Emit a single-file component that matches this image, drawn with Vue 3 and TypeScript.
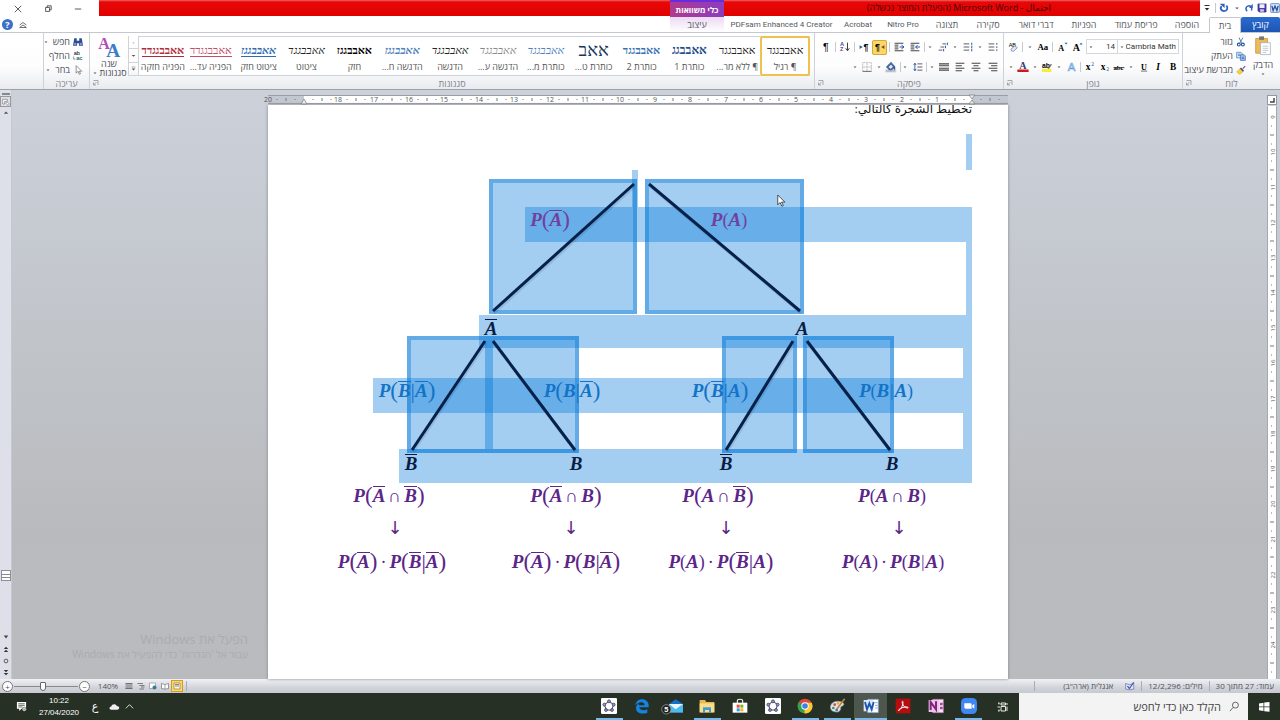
<script setup lang="ts">
import { ref } from 'vue'

const icons: Record<string, string> = {
  dd: '<path d="M5 7h6L8 10z" fill="#555"/>',
  word: '<rect x="1" y="1" width="14" height="14" rx="1" fill="#dbe7f6" stroke="#2b5fae"/><path d="M3 4.500l2 7.500 3-7 3 7 2-7.500" fill="none" stroke="#1d4f9f" stroke-width="2"/>',
  save: '<path d="M1.500 1.500h13v13h-11l-2-2z" fill="#4a3fb0" stroke="#2e2878"/><path d="M4 2h8v6H4z" fill="#eef"/><path d="M5 10h6v4H5z" fill="#ccd"/>',
  redo: '<path d="M12 12c2-5-2-9-6-7-3 1-4 5-1 8" fill="none" stroke="#2d62b8" stroke-width="2.500"/><path d="M14 1v7H8z" fill="#2d62b8"/>',
  undo: '<path d="M4 5c-3 4 0 8 4 8 5 0 7-5 4-9" fill="none" stroke="#2d62b8" stroke-width="3"/><path d="M1 1h8v7z" fill="#2d62b8"/>',
  more: '<path d="M4 4h8" stroke="#222" stroke-width="1.500"/><path d="M4.500 8h7L8 12z" fill="#222"/>',
  cut: '<path d="M5 1l4 9M11 1L6 10" stroke="#5b7fb5" stroke-width="1.600" fill="none"/><circle cx="4.500" cy="12" r="2.300" fill="none" stroke="#2452a0" stroke-width="1.800"/><circle cx="11" cy="12" r="2.300" fill="none" stroke="#2452a0" stroke-width="1.800"/>',
  copy: '<path d="M1 2h7l2 2v7H1z" fill="#dce9fa" stroke="#3567b2"/><path d="M7 6h6l2 2v7H7z" fill="#9fc3f0" stroke="#2c5da8"/><path d="M3 5h4M3 7h4M9 10h4M9 12h4" stroke="#2c5da8"/>',
  brush: '<path d="M10 5l4-4 1.500 1.500-4 4z" fill="#7355b0"/><path d="M8 4l5 5-2 2-5-5z" fill="#4c4c86"/><path d="M6 6l5 5-5 4-5-4z" fill="#f3d33c" stroke="#b89520" stroke-width=".7"/>',
  paste: '<path d="M2 5h17v21H2z" fill="#eeb95b" stroke="#c58d2d"/><path d="M7 2h7v5H7z" fill="#777"/><path d="M9 11h14v17H9z" fill="#fff" stroke="#9aa7b8"/><path d="M12 16h8M12 19h8M12 22h8M12 25h5" stroke="#a9b4c4"/>',
  grow: '<text x="1" y="14" font-family="Liberation Serif" font-weight="bold" font-size="16">A</text><path d="M12 4l2.500-3L17 4z" fill="#2858a8"/>',
  shrink: '<text x="2" y="14" font-family="Liberation Serif" font-weight="bold" font-size="13">A</text><path d="M12 1h5l-2.500 3z" fill="#2858a8"/>',
  aa: '<text x="-1" y="13" font-family="Liberation Serif" font-weight="bold" font-size="14">Aa</text>',
  clear: '<text x="1" y="8" font-family="Liberation Sans" font-size="9">AB</text><path d="M5 11l6-5 4 3-6 6-4-1z" fill="#dfe4f2" stroke="#6070a0"/>',
  bold: '<text x="3" y="13" font-family="Liberation Serif" font-weight="bold" font-size="15">B</text>',
  italic: '<text x="5" y="13" font-family="Liberation Serif" font-style="italic" font-weight="bold" font-size="15">I</text>',
  under: '<text x="3" y="12" font-family="Liberation Serif" font-weight="bold" font-size="13">U</text><path d="M3 14.500h10" stroke="#222"/>',
  strike: '<text x="-1" y="12" font-family="Liberation Serif" font-weight="bold" font-size="11">abc</text><path d="M-1 9h18" stroke="#222"/>',
  sub: '<text x="1" y="12" font-family="Liberation Serif" font-weight="bold" font-size="15">x</text><text x="10" y="15" font-size="8" fill="#2858a8">2</text>',
  sup: '<text x="1" y="13" font-family="Liberation Serif" font-weight="bold" font-size="15">x</text><text x="10" y="7" font-size="8" fill="#2858a8">2</text>',
  outline: '<text x="1" y="14" font-family="Liberation Sans" font-size="18" fill="#e8f2fd" stroke="#5d9bd8">A</text>',
  hilite: '<path d="M0 11h15v5H0z" fill="#f8ee2c"/><text x="0" y="9" font-size="11" font-weight="bold" font-family="Liberation Sans">ab</text><path d="M9 10l5-7 2 1-5 7z" fill="#667"/>',
  color: '<text x="2" y="11" font-family="Liberation Serif" font-weight="bold" font-size="16" fill="#27407c">A</text><path d="M-1 12h18v4H-1z" fill="#d11818"/>',
  bullets: '<path d="M1 3h9M1 8h9M1 13h9" stroke="#555" stroke-width="1.500"/><path d="M13 2h2v2h-2zM13 7h2v2h-2zM13 12h2v2h-2z" fill="#2452a0"/>',
  numbers: '<path d="M1 3h9M1 8h9M1 13h9" stroke="#555" stroke-width="1.500"/><path d="M14 1v4M14 6v4M14 11v4" stroke="#2452a0" stroke-width="1.500"/>',
  levels: '<path d="M7 3h6M4 8h6M1 13h6" stroke="#555" stroke-width="1.500"/><path d="M15 1v4M12 6v4M9 11v4" stroke="#2452a0" stroke-width="1.500"/>',
  outdent: '<path d="M1 2h14M1 14h14M1 5h6M1 8h6M1 11h6" stroke="#444" stroke-width="1.600"/><path d="M16 8h-7M12 5L9 8l3 3" stroke="#2858a8" stroke-width="1.600" fill="none"/>',
  indent: '<path d="M1 2h14M1 14h14M1 5h6M1 8h6M1 11h6" stroke="#444" stroke-width="1.600"/><path d="M9 8h7M12 5l4 3-4 3" stroke="#2858a8" stroke-width="1.600" fill="none"/>',
  rtl: '<text x="0" y="13" font-size="14" font-weight="bold" font-family="Liberation Sans">¶</text><path d="M15 5v6l-5-3z" fill="#8a3a20"/>',
  ltr: '<text x="7" y="13" font-size="14" font-weight="bold" font-family="Liberation Sans">¶</text><path d="M1 5v6l5-3z" fill="#2858a8"/>',
  sort: '<text x="0" y="7" font-size="9" font-weight="bold" font-family="Liberation Sans" fill="#2858a8">A</text><text x="0" y="15" font-size="9" font-weight="bold" font-family="Liberation Sans" fill="#7a3a90">Z</text><path d="M12 1v12M9 10l3 4 3-4" stroke="#333" stroke-width="1.500" fill="none"/>',
  pilcrow: '<text x="3" y="14" font-size="17" font-family="Liberation Sans">¶</text>',
  alR: '<path d="M1 2h14M5 6h10M1 10h14M5 14h10" stroke="#444" stroke-width="1.700"/>',
  alC: '<path d="M1 2h14M4 6h8M1 10h14M4 14h8" stroke="#444" stroke-width="1.700"/>',
  alL: '<path d="M1 2h14M1 6h10M1 10h14M1 14h10" stroke="#444" stroke-width="1.700"/>',
  alJ: '<path d="M0 3h16M0 6h16M0 10h16M0 13h16" stroke="#444" stroke-width="1.700"/>',
  spacing: '<path d="M7 3h8M7 8h8M7 13h8" stroke="#555" stroke-width="1.500"/><path d="M3 2v12M1 5l2-3 2 3M1 11l2 3 2-3" stroke="#2858a8" stroke-width="1.400" fill="none"/>',
  shade: '<path d="M2 8l6-6 5 6-6 5z" fill="#e7edf7" stroke="#4a6aa0"/><path d="M13 7c2 3 2 4 1 5s-2-1-1-5z" fill="#2858a8"/><path d="M0 13h15v2.500H0z" fill="#c8ccd2"/>',
  borders: '<path d="M1 1h14v14H1zM8 1v14M1 8h14" stroke="#888" stroke-dasharray="1.500 1" fill="none"/><path d="M1 15h14" stroke="#333"/>',
  find: '<path d="M2 2h4v4h4V2h4l2 12H9.500v-4h-3v4H0z" fill="#2f4c92"/><circle cx="3.500" cy="11" r="2" fill="#7c9ad6"/><circle cx="12.500" cy="11" r="2" fill="#7c9ad6"/>',
  replace: '<text x="1" y="7" font-size="9" font-family="Liberation Sans">ab</text><text x="5" y="15" font-size="9" font-weight="bold" font-family="Liberation Sans" fill="#286b6b">ac</text><path d="M1 9v4h3" stroke="#2858a8" fill="none"/>',
  select: '<path d="M5 1v12l3-3 2 5 2-1-2-4h4z" fill="#fff" stroke="#555"/>',
  styles: '<text x="-1" y="15" font-family="Liberation Serif" font-weight="bold" font-size="20" fill="#b04cb4">A</text><text x="9" y="25" font-family="Liberation Serif" font-weight="bold" font-size="24" fill="#3c7cc8">A</text>',
  launch: '<path d="M3 3h9v9M3 12L9 6M3 7v5h5" fill="none" stroke="#8b9098" stroke-width="1.500"/>',
  viewPrint: '<path d="M2 2h12v12H2z" fill="#fff8d8" stroke="#555"/><path d="M4 5h8M4 8h8" stroke="#666" stroke-width="1.500"/>',
  viewRead: '<path d="M1 3l6 2 1 1 1-1 6-2v10l-6 1H7l-6-1z" fill="#fff" stroke="#444"/><path d="M8 6v8" stroke="#444"/>',
  viewWeb: '<path d="M1 2h12v11H1z" fill="#fff" stroke="#667"/><circle cx="11" cy="11" r="4" fill="#2f7d9a"/>',
  viewOutline: '<path d="M1 3h11M5 7h10M8 10h7M5 14h9" stroke="#666" stroke-width="1.600"/>',
  viewDraft: '<path d="M1 3h14M1 6h14M1 10h14M1 13h14" stroke="#555" stroke-width="1.600"/>',
  proof: '<path d="M1 4l6 2 7-2v9l-7 1-6-1z" fill="#dfe6f6" stroke="#55639c"/><path d="M4 8l3 4 7-10" stroke="#4452b0" stroke-width="2" fill="none"/>',
  geo: '<rect width="24" height="24" rx="2" fill="#fff"/><path d="M12 5l7 5-3 8H8l-3-8z" fill="none" stroke="#555" stroke-width="1.600"/><g fill="#8f90ea" stroke="#333"><circle cx="12" cy="5" r="2.200"/><circle cx="19" cy="10" r="2.200"/><circle cx="16.500" cy="18" r="2.200"/><circle cx="7.500" cy="18" r="2.200"/><circle cx="5" cy="10" r="2.200"/></g>',
  edge: '<path d="M2 11C3 5 7 2 12 2c6 0 10 4 10 9v3H8c0 4 7 6 12 3v5C12 25 3 23 3 15c0-3 2-6 5-7-1 1-1 2-1 3h9c0-6-9-6-14 0z" fill="#1583df"/>',
  mail: '<path d="M3 9l10-7 11 7v12H3z" fill="#1470c4"/><path d="M3 9h21v13H3z" fill="#4cb8f4"/><path d="M3 9l10 8 11-8z" fill="#e9f6ff"/><circle cx="-1" cy="17" r="7" fill="#222" stroke="#aaa"/><text x="-4" y="21" font-size="11" fill="#fff" font-weight="bold" font-family="Liberation Sans">5</text>',
  folder: '<path d="M1 3h8l2 3h12v16H1z" fill="#e8b84c"/><path d="M1 8h22v13H1z" fill="#fbdd86"/><path d="M6 22v-8h12v8h-3v-4H9v4z" fill="#3f9be0"/>',
  store: '<path d="M1 7h22v15H1z" fill="#fff"/><path d="M8 8V4c0-3 8-3 8 0v4" stroke="#fff" stroke-width="1.600" fill="none"/><path d="M7 10h4.500v4.500H7z" fill="#e8512c"/><path d="M12.500 10H17v4.500h-4.500z" fill="#7db32c"/><path d="M7 15.500h4.500V20H7z" fill="#2c9be0"/><path d="M12.500 15.500H17V20h-4.500z" fill="#f4b824"/>',
  chrome: '<circle cx="12" cy="12" r="11" fill="#e2483a"/><path d="M12 12L2.500 6.500A11 11 0 0 0 11 23z" fill="#2fa350"/><path d="M12 12l-1 11A11 11 0 0 0 22 7H12z" fill="#f8cb30"/><circle cx="12" cy="12" r="5.500" fill="#fff"/><circle cx="12" cy="12" r="4.200" fill="#3f80e8"/>',
  paint: '<path d="M1 16C-1 9 6 4 13 5s9 4 7 6-4 1-4 4-2 7-7 6-7-2-8-5z" fill="#dce6ee" stroke="#8a98a4"/><circle cx="7" cy="10" r="2" fill="#d8483c"/><circle cx="12" cy="8" r="2" fill="#f0b428"/><circle cx="5" cy="15" r="2" fill="#3c9a4c"/><circle cx="10" cy="18" r="2" fill="#3c6cc8"/><path d="M22 1L10 17" stroke="#c08040" stroke-width="2.500"/>',
  wordApp: '<path d="M7 2h16v20H7z" fill="#fff" stroke="#7ea0d0"/><path d="M18 7h4M18 11h4M18 15h4" stroke="#5c88c8"/><path d="M1 3h15v17H1z" fill="#dbe8fa"/><path d="M3 6l3 11 3.500-9L13 17l3-11" stroke="#1c56ac" stroke-width="2.800" fill="none"/>',
  pdf: '<rect x="1" y="1" width="22" height="22" fill="#b70c10"/><path d="M5 19c3-1 7-7 7-13 0-2-2-1-1 2 1 4 5 7 8 7 2-1 0-2-4-1.500S6 16 5 19z" fill="none" stroke="#fff" stroke-width="1.500"/>',
  note: '<path d="M7 2h16v20H7z" fill="#f8e4f4" stroke="#c078b8"/><path d="M1 3h16v18H1z" fill="#eec4e8"/><path d="M4 18V6l8 11V5" stroke="#80247c" stroke-width="3" fill="none"/><path d="M18 7h4v4h-4zM18 13h4v4h-4z" fill="#a04898"/>',
  zoom: '<rect width="24" height="24" rx="7" fill="#3f87f2"/><path d="M5 8h9q2 0 2 2v6H7q-2 0-2-2z" fill="#fff"/><path d="M17 11l3-2v7l-3-2z" fill="#fff"/>',
  tasks: '<path d="M2 4h3M2 20h3M4 4v3M4 20v-3M8 4h9v4H8zM8 11h9v9H8zM20 4v4M20 11v9M1 12h5" fill="none" stroke="#fff" stroke-width="1.800"/>',
  start: '<path d="M2 5l9-1.500V11H2zM12.500 3.200L23 1.800V11H12.500zM2 12.500h9V20l-9-1.500zM12.500 12.500H23v9.200l-10.500-1.400z" fill="#fff"/>',
  search: '<circle cx="14" cy="9" r="6.500" fill="none" stroke="#333" stroke-width="1.600"/><path d="M9 14l-7 8" stroke="#333" stroke-width="1.600"/>',
  notify: '<path d="M2 2h20v15H12l-5 5v-5H2z" fill="#fff"/><path d="M5 6h14M5 9.500h14M5 13h9" stroke="#263024" stroke-width="1.500"/><circle cx="18" cy="18" r="4.500" fill="#ddd" stroke="#263024"/><path d="M16 18h4" stroke="#263024"/>',
  cloud: '<path d="M5 19c-5 0-5-7 0-7 1-6 10-7 12-1 7 0 7 8 1 8z" fill="#eee"/>',
  up: '<path d="M4 16l8-8 8 8" fill="none" stroke="#fff" stroke-width="1.800"/>',
}

interface Tab { label: string; w: number; kind?: string }
const tabs: Tab[] = [
  { label: 'קובץ', w: 39, kind: 'file' },
  { label: 'בית', w: 32, kind: 'home' },
  { label: 'הוספה', w: 44 },
  { label: 'פריסת עמוד', w: 58 },
  { label: 'הפניות', w: 46 },
  { label: 'דברי דואר', w: 50 },
  { label: 'סקירה', w: 46 },
  { label: 'תצוגה', w: 36 },
  { label: 'Nitro Pro', w: 52, kind: 'latin' },
  { label: 'Acrobat', w: 38, kind: 'latin' },
  { label: 'PDFsam Enhanced 4 Creator', w: 115, kind: 'latin' },
  { label: 'עיצוב', w: 54, kind: 'ctx' },
]

const fontRow1 = ['grow', 'shrink', '|', 'aa', 'dd', '|', 'clear']
const fontRow2 = ['bold', 'italic', 'under', 'dd', 'strike', 'sub', 'sup', '|', 'outline', 'dd', 'hilite', 'dd', 'color', 'dd']
const paraRow1 = ['bullets', 'dd', 'numbers', 'dd', 'levels', 'dd', '|', 'outdent', 'indent', '|', 'rtl', 'ltr', '|', 'sort', '|', 'pilcrow']
const paraRow2 = ['alR', 'alC', 'alL', 'alJ', 'dd', '|', 'spacing', 'dd', '|', 'shade', 'dd', 'borders', 'dd']

const gallery = [
  { name: '¶ רגיל', cls: 'on', s: 'אאבבגגד' },
  { name: '¶ ללא מר...', cls: '', s: 'אאבבגגד' },
  { name: 'כותרת 1', cls: 'h1', s: 'אאבבגג' },
  { name: 'כותרת 2', cls: 'h2', s: 'אאבבגגד' },
  { name: 'כותרת ט...', cls: 'title', s: 'אאב' },
  { name: 'כותרת מ...', cls: 'subt', s: 'אאבבגגד' },
  { name: 'הדגשה ע...', cls: 'faint', s: 'אאבבגגד' },
  { name: 'הדגשה', cls: 'it', s: 'אאבבגגד' },
  { name: 'הדגשה ח...', cls: 'strongem', s: 'אאבבגגז' },
  { name: 'חזק', cls: 'b', s: 'אאבבגגז' },
  { name: 'ציטוט', cls: 'it', s: 'אאבבגגד' },
  { name: 'ציטוט חזק', cls: 'quote', s: 'אאבבגגז' },
  { name: 'הפניה עד...', cls: 'refl', s: 'אאבבגגדד' },
  { name: 'הפניה חזקה', cls: 'refb', s: 'אאבבגגדד' },
]

const cm = 35.2
const hNums = [...Array.from({ length: 18 }, (_, i) => i + 1), 20]
const vNums = Array.from({ length: 16 }, (_, i) => i + 9)

/* Page coordinates: x, y, width, height */
const bands = [
  [698, 29, 6, 36], [364, 65, 6, 37], [257, 102, 447, 35], [698, 137, 6, 73],
  [211, 210, 493, 33], [695, 243, 9, 30], [105, 273, 599, 35], [695, 308, 9, 36], [131, 344, 573, 34],
]
const frames = [
  [221, 74, 148, 135], [377, 74, 159, 135],
  [139, 231, 82, 117], [221, 231, 90, 117],
  [454, 231, 75, 117], [535, 231, 91, 117],
]
const branches = [
  [366, 79, 225, 206], [381, 79, 532, 206],
  [217, 236, 144, 345], [225, 236, 307, 345],
  [525, 236, 458, 345], [539, 236, 622, 345],
]

/* "~" puts a bar over the next letter, "[" and "]" are tall parentheses */
interface Formula { t: string; x: number; y: number; c: string }
const formulas: Formula[] = [
  { t: 'P[~A]', x: 282, y: 115, c: 'plum' }, { t: 'P(A)', x: 461, y: 115, c: 'plum' },
  { t: '~A', x: 223, y: 224, c: 'navy' }, { t: 'A', x: 534, y: 224, c: 'navy' },
  { t: 'P[~B|~A]', x: 139, y: 286, c: 'blue' }, { t: 'P[B|~A]', x: 304, y: 286, c: 'blue' },
  { t: 'P[~B|A]', x: 452, y: 286, c: 'blue' }, { t: 'P(B|A)', x: 618, y: 286, c: 'blue' },
  { t: '~B', x: 143, y: 359, c: 'navy' }, { t: 'B', x: 308, y: 359, c: 'navy' },
  { t: '~B', x: 458, y: 359, c: 'navy' }, { t: 'B', x: 624, y: 359, c: 'navy' },
  { t: 'P[~A∩~B]', x: 121, y: 391, c: 'violet' }, { t: 'P[~A∩B]', x: 298, y: 391, c: 'violet' },
  { t: 'P[A∩~B]', x: 450, y: 391, c: 'violet' }, { t: 'P(A∩B)', x: 624, y: 391, c: 'violet' },
  { t: '↓', x: 127, y: 423, c: 'violet' }, { t: '↓', x: 303, y: 423, c: 'violet' },
  { t: '↓', x: 458, y: 423, c: 'violet' }, { t: '↓', x: 631, y: 423, c: 'violet' },
  { t: 'P[~A]·P[~B|~A]', x: 124, y: 457, c: 'violet' }, { t: 'P[~A]·P[B|~A]', x: 298, y: 457, c: 'violet' },
  { t: 'P(A)·P[~B|A]', x: 453, y: 457, c: 'violet' }, { t: 'P(A)·P(B|A)', x: 625, y: 457, c: 'violet' },
]
function parts(t: string): { s: string; k: string }[] {
  const out: { s: string; k: string }[] = []
  let bar = false
  let tall = false
  for (const ch of t) {
    if (ch === '~') { bar = true; continue }
    if (ch === '[') { tall = true; out.push({ s: '(', k: 'par tall' }) }
    else if (ch === ']') { tall = false; out.push({ s: ')', k: 'par tall' }) }
    else if (ch === '(' || ch === ')') out.push({ s: ch, k: 'par' })
    else if (ch === '|') out.push({ s: ch, k: tall ? 'given tall' : 'given' })
    else if (ch === '∩' || ch === '·') out.push({ s: ch, k: 'op' })
    else if (ch === '↓') out.push({ s: ch, k: 'arrow' })
    else out.push({ s: ch, k: bar ? 'v bar' : 'v' })
    bar = false
  }
  return out
}

const apps = [
  { i: 'zoom', c: 'run' }, { i: 'note', c: '' }, { i: 'pdf', c: '' }, { i: 'wordApp', c: 'run front' },
  { i: 'paint', c: 'run' }, { i: 'chrome', c: 'run' }, { i: 'geo', c: '' }, { i: 'store', c: '' },
  { i: 'folder', c: 'run' }, { i: 'mail', c: '' }, { i: 'edge', c: '' }, { i: 'geo', c: 'run' },
]
const views = ['viewPrint', 'viewRead', 'viewWeb', 'viewOutline', 'viewDraft']
const zoomLevel = ref(44)
</script>

<template>
  <div class="app" dir="rtl">
    <header class="titlebar">
      <div class="quick">
        <svg class="i10" viewBox="0 0 16 16" v-html="icons.word" />
        <button v-for="q in ['save', 'redo', 'dd', 'undo']" :key="q" :aria-label="q"><svg class="i10" viewBox="0 0 16 16" v-html="icons[q]" /></button>
        <i class="sep" />
        <button aria-label="more"><svg class="i10" viewBox="0 0 16 16" v-html="icons.more" /></button>
      </div>
      <div class="red main"><span>احتمال - Microsoft Word (הפעלת המוצר נכשלה)</span></div>
      <div class="ctxhead">כלי משוואות</div>
      <div class="red rest" />
      <div class="wincontrols">
        <button aria-label="minimize"><svg viewBox="0 0 10 10"><path d="M1 5h8" /></svg></button>
        <button aria-label="restore"><svg viewBox="0 0 10 10"><path d="M2 3h5v5H2zM4 3V1h5v5H7" /></svg></button>
        <button aria-label="close"><svg viewBox="0 0 10 10"><path d="M1 1l8 8M9 1L1 9" /></svg></button>
      </div>
    </header>

    <nav class="tabs">
      <button v-for="t in tabs" :key="t.label" :class="['tab', t.kind]" :style="{ width: t.w + 'px' }">{{ t.label }}</button>
      <div class="help">
        <button aria-label="collapse"><svg viewBox="0 0 12 12"><path d="M2 6l4-3 4 3M2 9l4-3 4 3z" fill="none" stroke="#555" /></svg></button>
        <button class="q" aria-label="help">?</button>
      </div>
    </nav>

    <section class="ribbon">
      <div class="group clip">
        <div class="body cliprow">
          <button class="big"><svg class="pasteic" viewBox="0 0 25 30" v-html="icons.paste" /><span>הדבק</span><svg class="i8" viewBox="0 0 16 16" v-html="icons.dd" /></button>
          <div class="stack">
            <button><svg class="i10" viewBox="0 0 16 16" v-html="icons.cut" />גזור</button>
            <button><svg class="i10" viewBox="0 0 16 16" v-html="icons.copy" />העתק</button>
            <button><svg class="i10" viewBox="0 0 16 16" v-html="icons.brush" />מברשת עיצוב</button>
          </div>
        </div>
        <div class="cap"><span>לוח</span><svg class="i8" viewBox="0 0 16 16" v-html="icons.launch" /></div>
      </div>

      <div class="group font">
        <div class="body rows">
          <div class="row">
            <label class="combo wide"><select aria-label="גופן"><option>Cambria Math</option></select><svg class="i8" viewBox="0 0 16 16" v-html="icons.dd" /></label>
            <label class="combo"><select aria-label="גודל"><option>14</option></select><svg class="i8" viewBox="0 0 16 16" v-html="icons.dd" /></label>
            <div class="tools">
              <template v-for="(n, k) in fontRow1" :key="k"><i v-if="n === '|'" class="sep" /><button v-else :class="['tool', n]" :aria-label="n"><svg viewBox="0 0 16 16" v-html="icons[n]" /></button></template>
            </div>
          </div>
          <div class="tools">
            <template v-for="(n, k) in fontRow2" :key="k"><i v-if="n === '|'" class="sep" /><button v-else :class="['tool', n]" :aria-label="n"><svg viewBox="0 0 16 16" v-html="icons[n]" /></button></template>
          </div>
        </div>
        <div class="cap"><span>גופן</span><svg class="i8" viewBox="0 0 16 16" v-html="icons.launch" /></div>
      </div>

      <div class="group para">
        <div class="body rows">
          <div class="tools">
            <template v-for="(n, k) in paraRow1" :key="k"><i v-if="n === '|'" class="sep" /><button v-else :class="['tool', n]" :aria-label="n"><svg viewBox="0 0 16 16" v-html="icons[n]" /></button></template>
          </div>
          <div class="tools short">
            <template v-for="(n, k) in paraRow2" :key="k"><i v-if="n === '|'" class="sep" /><button v-else :class="['tool', n]" :aria-label="n"><svg viewBox="0 0 16 16" v-html="icons[n]" /></button></template>
          </div>
        </div>
        <div class="cap"><span>פיסקה</span><svg class="i8" viewBox="0 0 16 16" v-html="icons.launch" /></div>
      </div>

      <div class="group stylesg">
        <div class="body galrow">
          <div class="gallery">
            <button v-for="g in gallery" :key="g.name" :class="['style', g.cls]"><span class="sample"><span>{{ g.s }}</span></span><span class="nm">{{ g.name }}</span></button>
          </div>
          <div class="spin">
            <button aria-label="up"><svg viewBox="0 0 8 8"><path d="M2 5l2-2 2 2z" fill="#aaa" /></svg></button>
            <button aria-label="down"><svg viewBox="0 0 8 8"><path d="M1 3h6L4 6z" fill="#555" /></svg></button>
            <button aria-label="expand"><svg viewBox="0 0 8 8"><path d="M1 1h6v1H1zM1 4h6L4 7z" fill="#555" /></svg></button>
          </div>
          <button class="big change"><svg class="stylic" viewBox="0 0 25 26" v-html="icons.styles" /><span>שנה</span><span class="dl">סגנונות<svg class="i8" viewBox="0 0 16 16" v-html="icons.dd" /></span></button>
        </div>
        <div class="cap"><span>סגנונות</span><svg class="i8" viewBox="0 0 16 16" v-html="icons.launch" /></div>
      </div>

      <div class="group edit">
        <div class="body stack">
          <button><svg class="i10" viewBox="0 0 16 16" v-html="icons.find" />חפש<svg class="i8" viewBox="0 0 16 16" v-html="icons.dd" /></button>
          <button><svg class="i10" viewBox="0 0 16 16" v-html="icons.replace" />החלף</button>
          <button><svg class="i10" viewBox="0 0 16 16" v-html="icons.select" />בחר<svg class="i8" viewBox="0 0 16 16" v-html="icons.dd" /></button>
        </div>
        <div class="cap"><span>עריכה</span></div>
      </div>
      <div class="void" />
    </section>

    <main class="work">
      <aside class="vruler">
        <div class="tabsel"><svg viewBox="0 0 8 8"><path d="M6 2v4H2" fill="none" stroke="#444" stroke-width="1.500" /></svg></div>
        <svg class="vr" width="8" height="640" viewBox="0 0 8 640">
          <g v-for="n in vNums" :key="n" :transform="`translate(4 ${Math.round((n - 9) * cm) + 11})`">
            <text transform="rotate(-90)" y="3" text-anchor="middle">{{ n }}</text>
            <path d="M-1 9h1M-2 18h4M-1 27h1" />
          </g>
        </svg>
      </aside>

      <div class="canvas">
        <svg class="hr" viewBox="0 0 740 9">
          <rect width="740" height="9" fill="#c3c7cf" /><rect x="36" width="668" height="9" fill="#fff" />
          <path d="M0 .5h740M0 8.500h740" stroke="#9a9fa8" fill="none" />
          <g v-for="n in hNums" :key="n" :transform="`translate(${704 - Math.round(n * cm)} 0)`">
            <text x="0" y="7" text-anchor="middle">{{ n }}</text>
            <path d="M9 4v1M18 3v3M27 4v1" stroke="#777" />
          </g>
          <path d="M713 4v1M722 3v3M731 4v1M54 3v3M45 4v1M63 4v1" stroke="#777" />
          <path d="M704 5l3 4h-6zM701 0h6l-3 4zM36 4l3 5h-6z" fill="#eee" stroke="#777" stroke-width=".7" />
        </svg>
        <article class="page">
          <p class="intro">تخطيط الشجرة كالتالي:</p>
          <svg class="tree" viewBox="0 0 740 574">
            <rect v-for="(b, k) in bands" :key="'b' + k" :x="b[0]" :y="b[1]" :width="b[2]" :height="b[3]" class="sel" />
            <g v-for="(f, k) in frames" :key="'f' + k">
              <rect :x="f[0]" :y="f[1]" :width="f[2]" :height="f[3]" class="sel" />
              <rect :x="f[0] + 2" :y="f[1] + 2" :width="f[2] - 4" :height="f[3] - 4" class="rim" />
            </g>
            <g v-for="(l, k) in branches" :key="'l' + k">
              <line :x1="l[0] + 1" :y1="l[1] + 2" :x2="l[2] + 1" :y2="l[3] + 2" class="shade" />
              <line :x1="l[0]" :y1="l[1]" :x2="l[2]" :y2="l[3]" class="branch" />
            </g>
          </svg>
          <div v-for="(f, k) in formulas" :key="k" dir="ltr" :class="['math', f.c]" :style="{ left: f.x + 'px', top: f.y + 'px' }">
            <span v-for="(p, j) in parts(f.t)" :key="j" :class="p.k">{{ p.s }}</span>
          </div>
          <svg class="cursor" viewBox="0 0 12 18"><path d="M1 1v13l3-3 2.500 5 2-1L6 10.500h4.500z" fill="#fff" stroke="#222" /></svg>
        </article>
        <div class="activate"><b>הפעל את Windows</b><span>עבור אל 'הגדרות' כדי להפעיל את Windows</span></div>
      </div>

      <aside class="scroll">
        <i class="split" />
        <button class="rul" aria-label="ruler"><svg viewBox="0 0 12 12"><path d="M1 2h7v3H4v4H1zM8 6l3 3-2 2-3-3z" fill="#fff" stroke="#777" /></svg></button>
        <button aria-label="up"><svg viewBox="0 0 8 8"><path d="M1 5h6L4 2z" fill="#555" /></svg></button>
        <div class="track"><i class="thumb" /></div>
        <button aria-label="down"><svg viewBox="0 0 8 8"><path d="M1 2h6L4 6z" fill="#444" /></svg></button>
        <button aria-label="previous"><svg viewBox="0 0 8 8"><path d="M1 4h6L4 1zM1 8h6L4 5z" fill="#333" /></svg></button>
        <button aria-label="browse"><svg viewBox="0 0 8 8"><circle cx="4" cy="4" r="2.500" fill="none" stroke="#333" /></svg></button>
        <button aria-label="next"><svg viewBox="0 0 8 8"><path d="M1 0h6L4 3zM1 4h6L4 7z" fill="#333" /></svg></button>
      </aside>
    </main>

    <footer class="status">
      <span class="st">עמוד: 27 מתוך 30</span><i class="sep" />
      <span class="st">מילים: 12/2,296</span><i class="sep" />
      <svg class="i10 proof" viewBox="0 0 16 16" v-html="icons.proof" />
      <span class="st lang">אנגלית (ארה"ב)</span><i class="sep" />
      <span class="grow" />
      <i class="sep" />
      <button v-for="v in views" :key="v" :class="['view', v]" :aria-label="v"><svg viewBox="0 0 16 16" v-html="icons[v]" /></button>
      <span class="pct">140%</span>
      <div class="zoomer">
        <button aria-label="zoom out">−</button>
        <input v-model="zoomLevel" type="range" dir="ltr" min="0" max="100" aria-label="zoom">
        <button aria-label="zoom in">+</button>
      </div>
    </footer>

    <div class="taskbar">
      <button class="start" aria-label="start"><svg viewBox="0 0 24 24" v-html="icons.start" /></button>
      <label class="search"><svg viewBox="0 0 24 24" v-html="icons.search" /><input type="text" placeholder="הקלד כאן כדי לחפש"></label>
      <button class="start" aria-label="task view"><svg viewBox="0 0 24 24" v-html="icons.tasks" /></button>
      <div class="apps">
        <button v-for="(a, k) in apps" :key="k" :class="a.c" :aria-label="a.i"><svg viewBox="0 0 24 24" v-html="icons[a.i]" /></button>
      </div>
      <span class="grow" />
      <div class="tray">
        <svg viewBox="0 0 24 24" v-html="icons.up" />
        <svg viewBox="0 0 24 24" v-html="icons.cloud" />
        <span class="kb">ع</span>
        <span class="clock"><span>10:22</span><span>27/04/2020</span></span>
        <svg viewBox="0 0 24 24" v-html="icons.notify" />
      </div>
    </div>
  </div>
</template>

<style>
body { margin: 0; }
</style>

<style scoped>
.app { display: flex; flex-direction: column; height: 100vh; overflow: hidden; background: #fff; font: 9px/12px "Open Sans", "Noto Sans", "DejaVu Sans", sans-serif; color: #4a4d55; }
button { border: 0; padding: 0; margin: 0; background: none; font: inherit; color: inherit; display: flex; align-items: center; justify-content: center; white-space: nowrap; }
svg { display: block; flex: none; overflow: visible; direction: ltr; }
.i10 { width: 10px; height: 10px; }
.i8 { width: 8px; height: 8px; }
.sep { width: 1px; height: 10px; background: #c5c9d0; flex: none; }
.grow { flex: 1; }

.titlebar { display: flex; height: 17px; flex: none; }
.quick { width: 80px; display: flex; align-items: center; justify-content: space-between; box-sizing: border-box; padding: 0 0 2px 2px; }
.red { background: linear-gradient(#e66 0, #e80808 2px, #df0000 100%); height: 16px; }
.red.main { flex: 476 1 0; min-width: 0; line-height: 16px; color: #4a0404; white-space: nowrap; }
.red.main span { margin-right: 149px; }
.red.rest { flex: 571 1 0; }
.ctxhead { width: 54px; background: linear-gradient(90deg, #b03a8c, #8a3cc0); border-top: 2px solid #6a2ae0; box-sizing: border-box; color: #fff; font-weight: bold; font-size: 8px; text-align: center; line-height: 16px; white-space: nowrap; }
.wincontrols { width: 99px; display: flex; align-items: center; }
.wincontrols button { width: 30px; height: 16px; }
.wincontrols button:first-child { margin-right: 6px; }
.wincontrols svg { width: 8px; height: 8px; fill: none; stroke: #333; stroke-width: 1; }

.tabs { display: flex; height: 16px; flex: none; border-bottom: 1px solid #c4c8ce; box-sizing: border-box; }
.tab { height: 15px; color: #555860; font-size: 9px; }
.tab.latin { font: 8px/12px Roboto, "Liberation Sans", sans-serif; }
.tab.file { background: linear-gradient(#2b6bd0, #1c55b4); color: #fff; border-radius: 2px 2px 0 0; }
.tab.home { height: 16px; background: #fff; border: 1px solid #c4c8ce; border-bottom: 0; border-radius: 2px 2px 0 0; box-sizing: border-box; }
.tab.ctx { background: linear-gradient(#ecd9f4, #fff); }
.help { margin-right: auto; display: flex; align-items: center; gap: 5px; padding-left: 2px; }
.help svg { width: 10px; height: 10px; }
.q { width: 11px; height: 11px; border-radius: 50%; background: #3a70c8; color: #fff; font-weight: bold; font-size: 9px; }

.ribbon { display: flex; height: 57px; flex: none; background: linear-gradient(#fff 0, #fdfdfe 60%, #e9ebef 100%); border-bottom: 1px solid #9da1a8; box-sizing: border-box; }
.group { display: flex; flex-direction: column; border-left: 1px solid #cfd3d9; box-sizing: border-box; }
.body { flex: 1; min-height: 0; }
.cap { height: 11px; display: flex; align-items: center; justify-content: center; color: #80848c; line-height: 11px; position: relative; }
.cap svg { position: absolute; left: 2px; top: 1px; }
.clip { width: 98px; }
.font { width: 179px; }
.para { width: 189px; }
.stylesg { flex: 1; }
.edit { width: 46px; }
.void { width: 43px; }
.cliprow { display: flex; }
.big { flex-direction: column; width: 34px; line-height: 11px; justify-content: flex-start; padding-top: 2px; }
.pasteic { width: 18px; height: 21px; margin-bottom: 3px; }
.stylic { width: 20px; height: 21px; margin-bottom: 1px; }
.stack { display: flex; flex-direction: column; align-items: flex-start; padding-top: 2px; }
.stack button { height: 14px; flex: none; gap: 3px; }
.edit .stack { padding-right: 6px; }
.rows { display: flex; flex-direction: column; padding: 6px 3px 0; gap: 4px; }
.row { display: flex; }
.tools { display: flex; align-items: center; justify-content: space-between; height: 16px; flex: 1; }
.rows > .tools { flex: none; }
.row > .tools { padding-right: 3px; }
.tools.short { width: 149px; }
.tool { width: 15px; height: 15px; flex: none; }
.font .tools > .tool { width: 12px; }
.tool svg { width: 10px; height: 10px; }
.tool.dd, .font .tools > .tool.dd { width: 7px; }
.tool.dd svg { width: 8px; height: 8px; }
.tool.rtl { background: #fbd765; outline: 1px solid #d6a640; outline-offset: -1px; border-radius: 2px; }
.combo { display: flex; align-items: center; height: 15px; border: 1px solid #d5d8dd; box-sizing: border-box; background: #fff; width: 32px; }
.combo.wide { width: 62px; margin-left: -1px; }
.combo select { appearance: none; border: 0; background: none; padding: 0 2px 0 0; margin: 0; flex: 1; min-width: 0; font: 8px/12px Roboto, "Liberation Sans", sans-serif; color: #333; }

.galrow { display: flex; padding: 3px 4px 0 0; }
.gallery { flex: 1; display: flex; height: 40px; border: 1px solid #cfd3d9; box-sizing: border-box; background: #fff; min-width: 0; }
.style { flex: 1 1 0; min-width: 0; flex-direction: column; box-sizing: border-box; padding: 2px; color: #333; }
.style.on { outline: 2px solid #efc14e; outline-offset: -1px; border-radius: 2px; }
.sample { height: 21px; font: 11px/21px "Liberation Serif", "DejaVu Sans", serif; color: #222; }
.nm { line-height: 12px; color: #555; }
.h1 .sample { color: #1f4f8c; font-weight: bold; font-size: 12px; }
.h2 .sample { color: #3570b4; font-weight: bold; }
.title .sample { color: #17365d; font-size: 18px; }
.subt .sample { color: #4f81bd; font-style: italic; }
.faint .sample { color: #888; font-style: italic; }
.it .sample { font-style: italic; }
.strongem .sample { color: #4f81bd; font-style: italic; font-weight: bold; }
.b .sample { font-weight: bold; color: #000; }
.quote .sample span { color: #2e6cb0; font-style: italic; font-weight: bold; border-bottom: 1px solid #2e6cb0; }
.refl .sample span { color: #c0506a; border-bottom: 1px solid #c0506a; }
.refb .sample span { color: #b02a38; font-weight: bold; border-bottom: 1px solid #b02a38; }
.spin { width: 10px; height: 40px; display: flex; flex-direction: column; border-left: 1px solid #cfd3d9; box-sizing: border-box; }
.spin button { flex: 1; border-bottom: 1px solid #cfd3d9; }
.spin svg { width: 5px; height: 5px; }
.big.change { width: 38px; line-height: 9px; padding-top: 1px; }
.dl { display: flex; align-items: center; }

.work { flex: 1; min-height: 0; display: flex; background: linear-gradient(#ccd0d9, #c0c4c9 45%, #b9babd 75%, #babbbe); }
.vruler { width: 16px; display: flex; flex-direction: column; align-items: center; overflow: hidden; }
.tabsel { width: 10px; height: 10px; margin: 5px 0 1px; flex: none; background: #fff; border: 1px solid #9297a0; box-sizing: border-box; }
.vr { background: #fff; border: solid #a4a8b0; border-width: 0 1px; }
.vr text { font: 6px "Open Sans", sans-serif; fill: #555; }
.vr path { stroke: #777; fill: none; }
.canvas { flex: 1; min-width: 0; display: flex; flex-direction: column; align-items: center; position: relative; padding-top: 5px; }
.hr { width: 740px; height: 9px; margin-bottom: 1px; }
.hr text { font: 7px "Open Sans", sans-serif; fill: #555; }
.page { width: 740px; flex: 1; background: #fff; position: relative; overflow: hidden; box-shadow: 0 0 3px #808389; }
.intro { position: absolute; right: 36px; top: -6px; margin: 0; font: 12px/20px "Liberation Serif", "DejaVu Sans", serif; color: #111; white-space: nowrap; }
.tree { position: absolute; left: 0; top: 0; width: 740px; height: 574px; }
.sel { fill: rgba(0, 120, 215, .36); }
.rim { fill: none; stroke: rgba(0, 120, 215, .4); stroke-width: 4; }
.branch { stroke: #06204a; stroke-width: 3; }
.shade { stroke: rgba(0, 30, 80, .12); stroke-width: 3; }
.math { position: absolute; width: 0; height: 0; display: flex; align-items: center; justify-content: center; font: italic bold 19px/20px "Liberation Serif", serif; }
.math span { flex: none; }
.plum { color: #71409f; }
.navy { color: #0a1c44; }
.blue { color: #1273c8; }
.violet { color: #5c2689; }
.par { font-style: normal; font-weight: normal; font-size: 18px; }
.par.tall { font-size: 23px; line-height: 20px; }
.bar { background: linear-gradient(currentColor, currentColor) 0 0 / 100% 1px no-repeat; }
.given { font-style: normal; font-weight: normal; font-size: 16px; padding: 0 1px; }
.given.tall { font-size: 22px; padding: 0; }
.op { font-style: normal; font-size: 18px; padding: 0 3px; font-weight: normal; }
.arrow { font: 18px/20px "DejaVu Sans", sans-serif; }
.cursor { position: absolute; left: 509px; top: 89px; width: 9px; height: 14px; }
.activate { position: absolute; left: 60px; top: 541px; width: 176px; display: flex; flex-direction: column; color: #a9abb0; white-space: nowrap; }
.activate b { font-weight: normal; font-size: 13px; line-height: 17px; }
.activate span { font-size: 10px; line-height: 13px; }

.scroll { width: 12px; background: #dde0e8; display: flex; flex-direction: column; align-items: center; border-right: 1px solid #c5c9d0; box-sizing: border-box; }
.split { width: 8px; height: 2px; background: #888; margin: 3px 0 1px; }
.rul { width: 11px; height: 11px; border: 1px solid #999; box-sizing: border-box; }
.rul svg { width: 8px; height: 8px; }
.scroll button:not(.rul) { height: 12px; width: 11px; }
.scroll button:not(.rul) svg { width: 6px; height: 6px; }
.track { flex: 1; width: 11px; display: flex; flex-direction: column; align-items: center; padding-top: 451px; box-sizing: border-box; min-height: 0; }
.thumb { width: 10px; height: 11px; border: 1px solid #8b9098; background: linear-gradient(#fff 3px, #888 3px, #888 4px, #fff 4px, #fff 6px, #888 6px, #888 7px, #fff 7px); box-sizing: border-box; flex: none; }

.status { height: 14px; flex: none; display: flex; align-items: center; background: linear-gradient(#f0f1f5, #d2d4da 60%, #c6c9d0); color: #50535c; font-size: 8px; }
.st { padding: 0 6px; white-space: nowrap; }
.proof { margin: 0 6px; }
.lang { padding-left: 28px; }
.view { width: 12px; height: 12px; }
.view svg { width: 8px; height: 8px; }
.viewPrint { background: #fbd765; outline: 1px solid #d69a2a; outline-offset: -1px; }
.view + .view { margin-right: 0; }
.viewPrint { margin-right: 3px; }
.status .sep { background: #a9adb5; }
.pct { width: 26px; margin: 0 2px 0 5px; text-align: center; }
.zoomer { display: flex; align-items: center; gap: 1px; padding-left: 2px; }
.zoomer button { width: 11px; height: 11px; border: 1px solid #777; border-radius: 50%; background: #fff; line-height: 9px; box-sizing: border-box; }
.zoomer input { appearance: none; width: 64px; height: 1px; margin: 0; background: #888; }
.zoomer input::-webkit-slider-thumb { appearance: none; width: 6px; height: 9px; background: #fff; border: 1px solid #666; border-radius: 1px 1px 3px 3px; }

.taskbar { height: 27px; flex: none; display: flex; background: #263024; color: #fff; }
.start { width: 32px; }
.start svg { width: 12px; height: 12px; }
.search { width: 229px; display: flex; align-items: center; background: #f3f3f3; box-sizing: border-box; padding-right: 8px; gap: 8px; }
.search svg { width: 11px; height: 11px; }
.search input { flex: 1; min-width: 0; border: 0; background: none; outline: 0; padding: 0; font: 11px/16px "Open Sans", "Noto Sans", sans-serif; }
.search input::placeholder { color: #444; opacity: 1; }
.apps { width: 392px; margin-right: 2px; display: flex; }
.apps button { flex: 1; padding-bottom: 2px; }
.apps svg { width: 16px; height: 16px; }
.apps .run { background: linear-gradient(#76b9ed, #76b9ed) center bottom / 27px 2px no-repeat; }
.apps .front { background: linear-gradient(#76b9ed, #76b9ed) center bottom / 32px 2px no-repeat, #4d574d; }
.tray { display: flex; align-items: center; padding-left: 16px; }
.tray svg { width: 11px; height: 11px; margin-left: 4px; }
.kb { font: 11px/14px "DejaVu Sans", sans-serif; width: 20px; text-align: center; margin-left: 2px; }
.clock { display: flex; flex-direction: column; align-items: center; width: 48px; font: 8px/12px "Liberation Sans", sans-serif; margin-left: 8px; }
.tray svg:last-child { margin: 0; }
</style>
